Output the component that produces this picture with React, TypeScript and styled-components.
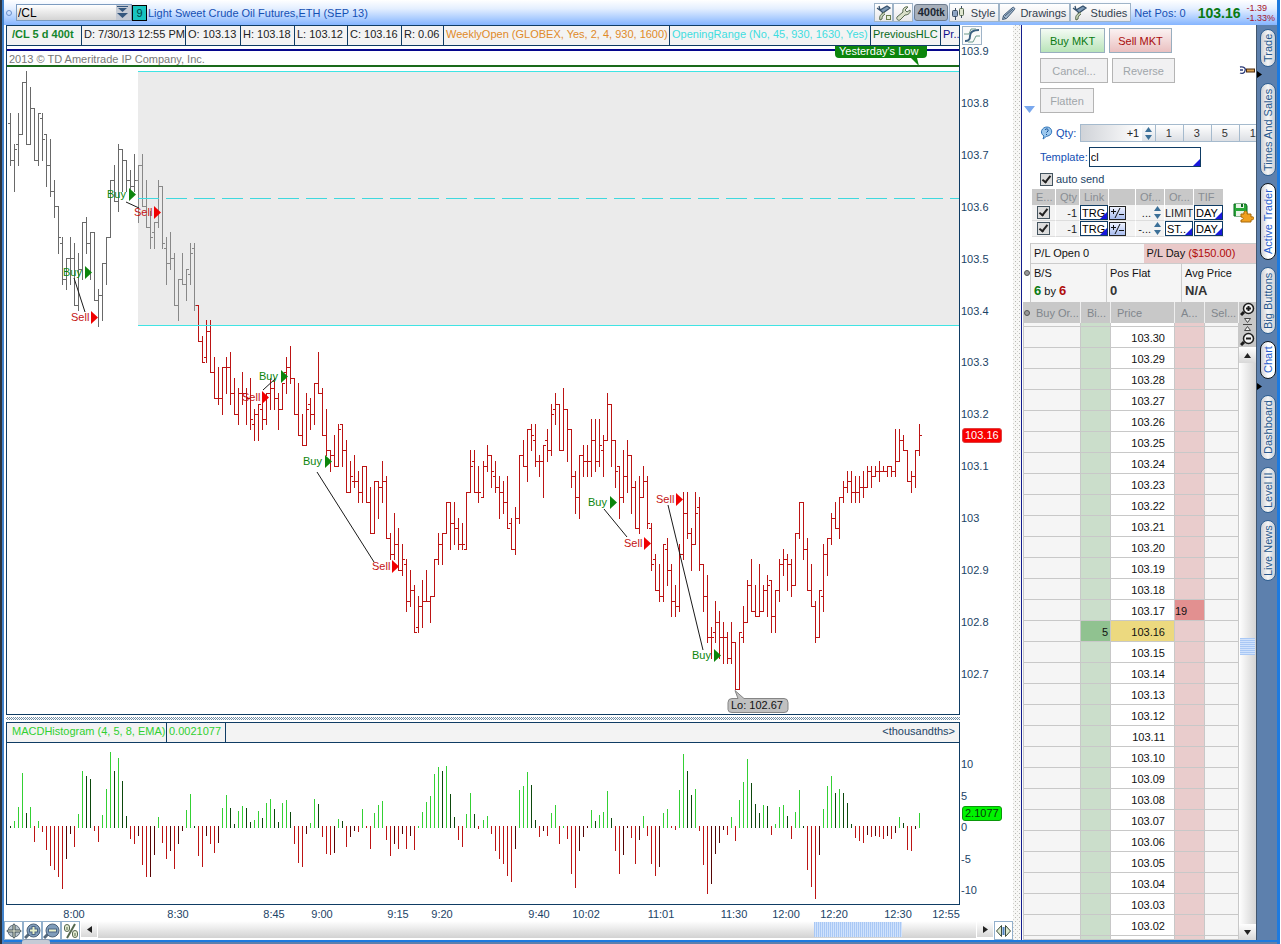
import React from "react";
import styled, { createGlobalStyle } from "styled-components";

const NAVY = "#0f3c64";
const INK = "#1b4366";
const BLUE = "#1450b4";
const GREEN = "#0c850c";
const RED = "#bc1414";

const GlobalStyle = createGlobalStyle`
  *, *::before, *::after { box-sizing: border-box; }
  body {
    margin: 0;
    background: #fff;
    font: 11px/14px "Liberation Sans", Arial, sans-serif;
    color: #111;
  }
  button, input, select { font: inherit; color: inherit; margin: 0; padding: 0; border-radius: 0; }
  button { cursor: pointer; white-space: nowrap; }
  svg { display: block; flex: none; }
`;

/* ---------- market data, in cents above 102.00: high low close [open] ---------- */

const BAR_SOURCE = `
178 168 169 176|172 163 171|178 168 174 172|184 174 184|186 172 172|183 172 179|179 169 169|178 168 178|178 169 173 177|174 164 168 174
173 162 163|165 158 160|160 151 154|154 145 146 153|150 144 150|154 145 150|153 141 141|151 140 148|157 146 157|158 151 153
155 146 155|155 142 142|144 137 143|149 138 149|154 145 154|165 154 165|168 161 161|172 159 171|171 163 169|169 163 165
167 163 164|170 163 165|168 157 168|170 160 160|165 156 156|159 152 154|157 152 157 155|165 156 164|164 152 153|154 145 149 152
155 148 150|151 141 141|146 138 146|151 145 145|148 142 148|153 145 151 147|153 140 141 152|141 134 134|135 130 130|138 130 136 131
138 128 128|131 123 123|129 122 123|129 120 129|131 124 129|132 122 124|127 120 120|125 118 124|128 122 124|125 118 123
127 117 119|121 115 120 118|122 115 122|124 117 119 121|124 118 124|127 121 125|127 121 123|124 117 121|126 121 126|131 124 129 128
133 126 127|127 120 120|126 116 116|120 114 114|124 114 121|123 117 120 122|126 118 126|132 124 124|125 116 116|121 112 113
113 109 112|116 110 110|118 110 117|118 110 113 118|115 105 105|111 105 108|112 106 107 107|109 103 105|110 103 110|110 103 103
106 97 97|107 97 107|107 100 106|111 103 107|108 96 96|97 92 93|101 92 95|98 90 90|95 89 92|92 82 84 91
90 83 86|87 78 78|85 78 83 79|88 79 84|90 84 84|85 80 85|92 85 92|97 91 95|97 91 97|103 97 103
103 94 99|103 95 98|100 94 95|99 94 95|105 94 105 94|113 105 110|113 105 105 111|110 103 105|111 104 110 104|114 109 112
112 106 109|111 105 106 108|108 100 105|107 101 103|108 98 98|100 94 94 99|102 93 100|112 99 112|115 110 110|117 107 117
118 113 116|118 110 111 115|112 108 111|114 104 114|117 111 113 115|122 112 120|124 118 122 121|122 113 113|125 113 121|121 111 117
117 106 108|109 101 104|112 100 112|114 108 111|114 108 111|119 108 115|119 109 111|119 110 114|116 108 115 113|124 115 122
122 110 115|115 106 109|110 100 104 110|113 103 108|115 105 112|112 101 106|107 98 98|108 97 104|110 104 107|108 98 99
99 90 91 98|93 86 86 92|91 84 85|95 84 95|96 87 90 94|91 81 84|87 81 83|95 82 93|105 92 101|105 96 97
98 90 95|105 95 101|104 90 91 102|91 82 85|89 76 77|79 73 77|84 76 80 78|82 73 77|80 72 77|78 72 73
80 72 76|76 67 67|78 67 78|83 76 80 77|88 80 87|92 82 82|87 81 81|91 81 82|87 82 86|89 81 87
88 78 81 88|86 78 86|92 84 91|94 89 92|93 86 91|92 85 87|97 87 97|103 96 103|103 92 94|96 86 86
91 83 83|84 76 77|86 77 86|95 82 93 85|96 89 96|101 95 100|103 98 98|104 96 104|107 103 106|109 105 107
109 103 105|108 103 105|108 103 106|109 104 106|110 106 109|110 106 108|110 108 109|111 107 109|110 109 109|110 108 110
110 108 109 110|117 108 111|117 111 115|116 113 113|113 107 107|109 105 108|113 106 113|118 112 116`;

interface Bar { high: number; low: number; open: number; close: number }

const BARS: Bar[] = (() => {
  let prev = 0;
  return BAR_SOURCE.trim().split(/[|\n]/).map((text) => {
    const [high, low, close, open = prev] = text.trim().split(" ").map(Number);
    prev = close;
    return { high, low, close, open };
  });
})();

const MACD = [
  1, 6, 20, 54, 14, 20, -15, 6, -5, -23, -39, -43, -50, -62, -32, -7, -20, 13, 56, 51, 48, -4, -15, 12, 38, 75, 56, 69, 46, 11,
  -12, -17, -9, -38, -50, -50, -28, 10, -16, -32, -24, -42, -17, -4, 17, 33, 1, -29, -40, -9, -17, -26, -16, 19, 32, 19, 3, 16, 21, 19, 5,
  7, 16, 9, 24, 28, 18, 5, 24, 27, 15, -17, -36, -40, -7, 4, 28, 23, -10, -27, -28, -26, 8, 6, -20, -10, -4, -5, 18, -1,
  -22, 14, 22, 26, -13, -29, -17, -22, -7, -22, -9, -23, 1, 15, 25, 31, 53, 60, 56, 61, 33, 10, -13, -20, 13, 34, 13, -2,
  7, 11, -7, -24, -32, -37, -49, -55, -22, 37, 41, 55, 42, 7, -10, -4, -9, 14, 22, -17, 1, -12, -47, -61, -24, -10, -1,
  17, 6, 12, 15, 36, 9, -24, -47, -28, -1, -11, -37, -13, 11, -9, -37, -49, -40, 14, 18, -1, -3, 37, 73, 56, 32, 38, -4,
  -38, -67, -57, -27, -16, -3, -8, 10, -14, 27, 45, 68, 44, 23, 14, 22, 21, -8, 3, 20, 22, 11, -12, 15, 37, 1, -43, -60, -72, -28,
  18, 41, 51, 34, 38, 34, 24, 3, -11, -14, -16, -8, -10, -9, -10, -12, -9, -12, -6, 10, 4, -23, -24, -2, 14,
];

const barX = (i: number) => 3 + 4 * i + (i > 117 ? 1 : 0);
const priceY = (p: number) => Math.round(4.6 + (190 - p) * 5.19);

const barPath = (from: number, to: number) =>
  BARS.slice(from, to)
    .map((b, k) => {
      const x = barX(from + k);
      const top = priceY(b.high);
      return `M${x} ${top}h1V${priceY(b.low) + 1}h-1zM${x - 2} ${priceY(b.open)}h2v1h-2zM${x + 1} ${priceY(b.close)}h2v1h-2z`;
    })
    .join("");

const SIGNALS: { side: "Buy" | "Sell"; x: number; y: number }[] = [
  { side: "Buy", x: 100, y: 148 }, { side: "Sell", x: 127, y: 166 },
  { side: "Buy", x: 56, y: 226 }, { side: "Sell", x: 64, y: 271 },
  { side: "Buy", x: 252, y: 330 }, { side: "Sell", x: 235, y: 351 },
  { side: "Buy", x: 296, y: 415 }, { side: "Sell", x: 365, y: 520 },
  { side: "Buy", x: 581, y: 456 }, { side: "Sell", x: 617, y: 497 },
  { side: "Sell", x: 649, y: 453 }, { side: "Buy", x: 685, y: 609 },
];
const TRADE_LINKS = "M119 156L132 162M67 232L78 266M256 344L268 333M310 426L367 516M597 463L620 491M661 459L696 604";

const TIMES: [string, number][] = [
  ["8:00", 67], ["8:30", 171], ["8:45", 267], ["9:00", 315], ["9:15", 391], ["9:20", 435], ["9:40", 532], ["10:02", 579],
  ["11:01", 654], ["11:30", 727], ["12:00", 779], ["12:20", 827], ["12:30", 891], ["12:55", 939],
];

/* ---------- frame ---------- */

const Desktop = styled.div`
  display: flex;
  min-height: 100vh;
  border-left: 2px solid #2c3540;
  border-right: 1px solid #fff;
`;
const Frame = styled.div`
  flex: 1;
  min-width: 0;
  display: flex;
  flex-direction: column;
  border-left: 2px solid #4283cc;
  border-right: 3px solid #1e7ade;
`;
const TitleBar = styled.header`
  height: 25px;
  display: flex;
  align-items: center;
  padding-right: 2px;
  background: linear-gradient(#fff, #e4efff 35%, #85b5ff);
  color: ${BLUE};
  white-space: nowrap;
`;
const Main = styled.main`
  flex: 1;
  display: flex;
`;
const Footer = styled.footer`
  height: 4px;
  border-top: 2px solid #1e7ade;
  background: #5d80ad;
  padding-left: 18px;
`;
const FooterTab = styled.div`
  position: relative;
  top: -3px;
  width: 28px;
  height: 5px;
  border-radius: 3px 3px 0 0;
  border-top: 1px solid #8a9ab0;
  background: #c6cbd6;
  svg { margin: 0 auto; }
`;

/* ---------- title bar ---------- */

const LinkDot = styled.span`
  width: 6px;
  height: 6px;
  margin: 0 4px 0 2px;
  border: 1px solid #6a90cc;
  border-radius: 3px;
`;
const SymbolBox = styled.div`
  display: flex;
  width: 116px;
  height: 17px;
  border: 1px solid #7d9cc0;
  background: linear-gradient(#fff, #d4d4d4);
  input { flex: 1; width: 50px; border: 0; background: none; padding-left: 1px; font-size: 12px; color: #000; outline: 0; }
  button { width: 15px; border: 0; background: #c4cad4; }
`;
const LinkColor = styled.button`
  width: 15px;
  height: 16px;
  margin-right: 1px;
  border: 1px solid #000;
  background: #18c4c0;
  color: #044;
  line-height: 14px;
`;
const Title = styled.h1`
  margin: 0;
  font: inherit;
  flex: 1;
`;
const ToolButton = styled.button<{ $w: number }>`
  display: flex;
  align-items: center;
  justify-content: space-between;
  width: ${(p) => p.$w}px;
  height: 19px;
  padding: 0 3px 0 1px;
  border: 1px solid #9fb4c8;
  background: linear-gradient(#fff, #e8e8ea);
  color: #33404e;
`;
const Ticks = styled.button`
  width: 34px;
  height: 17px;
  margin: 0 1px;
  border: 1px solid #6d7c8e;
  border-radius: 3px;
  background: #a6afbb;
  color: #1c2733;
  font-weight: bold;
  line-height: 14px;
  small { font-size: 10px; }
`;
const NetPos = styled.span`
  margin: 0 12px 0 3px;
`;
const LastPrice = styled.strong`
  color: #0a7a12;
  font-size: 14px;
`;
const Change = styled.span`
  margin-left: 6px;
  color: #a8142c;
  font-size: 9px;
  line-height: 10px;
`;

/* ---------- chart ---------- */

const ChartPane = styled.section`
  flex: 1;
  min-width: 0;
  display: flex;
  flex-direction: column;
  background: #fff;
`;
const ChartRow = styled.div<{ $grow?: boolean }>`
  display: flex;
  padding-left: 2px;
  flex: ${(p) => (p.$grow ? 1 : "none")};
`;
const PlotBox = styled.div`
  flex: 1;
  min-width: 0;
  overflow: hidden;
  border: 1px solid ${NAVY};
`;
const StatusRow = styled.div`
  display: flex;
  height: 20px;
  border-bottom: 1px solid ${NAVY};
  background: #f3f3f3;
  line-height: 17px;
  white-space: nowrap;
`;
const Status = styled.span<{ $w?: number; $color?: string; $bold?: boolean; $start?: boolean }>`
  flex: ${(p) => (p.$w ? `0 0 ${p.$w}px` : 1)};
  padding-left: ${(p) => (p.$start ? 5 : 2)}px;
  overflow: hidden;
  border-right: ${(p) => (p.$w ? 1 : 0)}px solid ${NAVY};
  color: ${(p) => p.$color || "#222"};
  font-weight: ${(p) => (p.$bold ? "bold" : "normal")};
`;
const Unit = styled.span`
  margin-left: auto;
  padding-right: 4px;
  color: ${INK};
`;
const Plot = styled.svg<{ $h: number }>`
  width: 100%;
  height: ${(p) => p.$h}px;
  overflow: hidden;
  font-size: 11px;
`;
const AxisColumn = styled.div`
  position: relative;
  width: 53px;
  flex: none;
  display: flex;
  flex-direction: column;
`;
const AxisTool = styled.button`
  width: 20px;
  height: 19px;
  margin: 1px 0 0 2px;
  border: 1px solid #9fb4c8;
  background: #fafafa;
`;
const AxisLabels = styled.div<{ $h: number; $top: number }>`
  height: ${(p) => p.$h}px;
  margin-top: ${(p) => p.$top}px;
  padding-left: 1px;
  display: flex;
  flex-direction: column;
  justify-content: space-between;
  color: ${INK};
  line-height: 13px;
`;
const AxisBadge = styled.span<{ $top: number; $bg: string; $fg: string; $line: string }>`
  position: absolute;
  left: 2px;
  top: ${(p) => p.$top}px;
  width: 40px;
  height: 15px;
  padding-left: 2px;
  border: 1px solid ${(p) => p.$line};
  border-radius: 3px;
  background: ${(p) => p.$bg};
  color: ${(p) => p.$fg};
  line-height: 13px;
`;
const Hatch = styled.div`
  height: 3px;
  margin: 2px 53px 2px 2px;
  background: repeating-conic-gradient(#6f8ba3 0 25%, #fff 0 50%) 0 0 / 2px 2px;
`;
const TimeAxis = styled.div`
  padding: 0 53px 0 3px;
`;
const ScrollRow = styled.div`
  display: flex;
  height: 19px;
`;
const ZoomButton = styled.button`
  display: flex;
  align-items: center;
  justify-content: center;
  width: 19px;
  height: 19px;
  border: 1px solid #93b0cc;
  background: #fff;
`;
const ArrowButton = styled.button`
  display: flex;
  align-items: center;
  justify-content: center;
  width: 16px;
  height: 16px;
  margin: 0 1px;
  border: 0;
  background: linear-gradient(#fff, #d8d8d8);
`;
const Track = styled.div`
  flex: 1;
  display: flex;
  height: 17px;
  padding: 1px 74px 1px 0;
  justify-content: flex-end;
  background: linear-gradient(#fff, #d2d2d2);
`;
const Thumb = styled.div`
  width: 88px;
  background: repeating-linear-gradient(90deg, #a9c8f5 0 1px, #d0e2fc 1px 2px);
`;
const Splitter = styled.div`
  width: 8px;
  background:
    conic-gradient(at 1px 1px, transparent 75%, #b8b8b4 0) 2px 0 / 4px 4px,
    conic-gradient(at 1px 1px, transparent 75%, #d0d0cc 0) 0 2px / 4px 4px,
    #f7f7f5;
`;

/* ---------- order panel ---------- */

const TradePanel = styled.aside`
  width: 235px;
  flex: none;
  overflow: hidden;
  border-left: 1px solid #141e8c;
  padding-left: 1px;
  background: #fff;
  white-space: nowrap;
`;
const OrderArea = styled.div`
  padding: 3px 0 6px;
`;
const OrderRow = styled.div<{ $gutter?: boolean; $h: number; $mb: number }>`
  display: flex;
  align-items: center;
  height: ${(p) => p.$h}px;
  margin-bottom: ${(p) => p.$mb}px;
  padding-left: ${(p) => (p.$gutter ? 0 : 17)}px;
  color: ${BLUE};
`;
const Collapse = styled.button`
  width: 17px;
  height: 24px;
  padding-left: 1px;
  border: 0;
  background: none;
  display: flex;
  align-items: flex-end;
`;
const OrderButton = styled.button<{ $w: number; $tone?: "buy" | "sell" }>`
  width: ${(p) => p.$w}px;
  height: 25px;
  margin-right: 4px;
  border: 1px solid ${(p) => (p.$tone ? "#98aebf" : "#b4b4b4")};
  background: ${(p) =>
    p.$tone === "buy" ? "linear-gradient(#f4fbf4, #b9e4b9)" : p.$tone === "sell" ? "linear-gradient(#fbf2f2, #eac0c0)" : "#f1f1f2"};
  color: ${(p) => (p.$tone === "buy" ? "#0a7a12" : p.$tone === "sell" ? "#a80c0c" : "#a0a6aa")};
`;
const Wrench = styled.button`
  margin-left: auto;
  border: 0;
  background: none;
`;
const QtyInput = styled.input`
  width: 62px;
  height: 18px;
  flex: none;
  margin-left: 4px;
  padding-right: 3px;
  border: 1px solid #a5bacd;
  border-right: 0;
  background: linear-gradient(90deg, #d0d3d8, #fff);
  color: #222;
  text-align: right;
`;
const SpinBox = styled.button<{ $boxed?: boolean }>`
  display: flex;
  flex: none;
  flex-direction: column;
  align-items: center;
  justify-content: center;
  gap: 3px;
  width: 13px;
  height: ${(p) => (p.$boxed ? 18 : 14)}px;
  border: ${(p) => (p.$boxed ? "1px solid #a5bacd" : 0)};
  border-width: ${(p) => (p.$boxed ? "1px 0" : 0)};
  background: ${(p) => (p.$boxed ? "linear-gradient(#fff, #dde2e8)" : "none")};
`;
const QtyButton = styled.button`
  flex: 0 0 28px;
  height: 18px;
  padding-right: 2px;
  border: 1px solid #a5bacd;
  border-right-width: 0;
  background: linear-gradient(#fff, #dcdfe4);
  color: #333;
`;
const TemplateLabel = styled.label`
  margin-right: 1px;
`;
const Pick = styled.span<{ $w: number; $h: number }>`
  position: relative;
  display: inline-block;
  vertical-align: top;
  width: ${(p) => p.$w}px;
  height: ${(p) => p.$h}px;
  border: 1px solid ${NAVY};
  background: #fff;
  color: #000;
  select { appearance: none; display: block; width: 100%; height: 100%; padding-left: 1px; border: 0; background: none; outline: 0; }
  &::after {
    content: "";
    position: absolute;
    right: 0;
    bottom: 0;
    border-left: 7px solid transparent;
    border-bottom: 7px solid #1818dc;
    pointer-events: none;
  }
`;
const Check = styled.input`
  appearance: none;
  display: flex;
  justify-content: center;
  flex: none;
  width: 13px;
  height: 13px;
  border: 1px solid #44545f;
  background: #dcdcdc;
  &:checked::after {
    content: "";
    width: 5px;
    height: 9px;
    border: solid #222;
    border-width: 0 2px 2px 0;
    transform: rotate(38deg);
  }
`;
const AutoSend = styled.label`
  margin-left: 3px;
  color: ${INK};
`;
const LegArea = styled.div`
  display: flex;
  align-items: center;
  gap: 9px;
  padding-left: 9px;
`;
const LegTable = styled.table`
  border-spacing: 0;
  table-layout: fixed;
  width: 192px;
  th, td { height: 16px; padding: 0; line-height: 14px; overflow: hidden; border-right: 1px solid #fff; font-weight: normal; }
  th { background: #c8c8c8; color: #888e94; padding-left: 4px; text-align: left; }
  td { background: #f3f3f3; color: #222; text-align: right; padding-right: 2px; border-bottom: 1px solid #ddd; }
  td:nth-child(n + 3) { padding: 0; text-align: left; }
  td:first-child { padding-left: 5px; }
`;
const PlusMinus = styled.button`
  display: block;
  width: 17px;
  height: 14px;
  border: 1px solid #222;
  background: linear-gradient(#eef2ff, #a9bdf0);
`;
const OffsetCell = styled.div`
  display: flex;
  align-items: center;
  justify-content: flex-end;
`;

/* ---------- position summary ---------- */

const Summary = styled.div`
  display: flex;
  padding-left: 1px;
`;
const Bullet = styled.span`
  width: 6px;
  height: 6px;
  flex: none;
  border-radius: 3px;
  border: 1px solid #555;
  background: #999;
`;
const SummaryGrid = styled.div`
  flex: 1;
  border-left: 1px solid #c8c8c8;
  color: #111;
`;
const ProfitRow = styled.div`
  display: grid;
  grid-template-columns: 1fr 1fr;
  border-top: 1px solid #ccc;
  line-height: 19px;
`;
const Profit = styled.span<{ $loss?: boolean }>`
  padding-left: 3px;
  background: ${(p) => (p.$loss ? "#e9c9c9" : "#f5f5f5")};
`;
const LossText = styled.span`
  color: #b00c0c;
`;
const PositionRow = styled.dl`
  display: grid;
  grid-template-columns: 1fr 1fr 1fr;
  margin: 0;
  height: 39px;
  border-top: 1px solid #ccc;
  background: #f5f5f5;
  div { padding: 2px 0 0 3px; }
  div + div { border-left: 1px solid #ccc; }
  dt { line-height: 15px; }
  dd { margin: 0; line-height: 20px; }
`;
const Figure = styled.b<{ $color?: string }>`
  font-size: 13px;
  color: ${(p) => p.$color || "#333"};
`;

/* ---------- price ladder ---------- */

const LadderArea = styled.div`
  display: flex;
`;
const Ladder = styled.table`
  border-spacing: 0;
  table-layout: fixed;
  width: 216px;
  border-left: 1px solid #c8c8c8;
  th, td { padding: 0; overflow: hidden; line-height: 20px; }
  th {
    height: 21px;
    padding-left: 6px;
    background: #c8c8c8;
    border-right: 1px solid #eee;
    color: #80868c;
    font-weight: normal;
    text-align: left;
  }
  th:first-child { padding-left: 0; }
`;
const LadderCell = styled.td<{ $bg: string; $align?: string; $h: number }>`
  height: ${(p) => p.$h}px;
  border-right: 1px solid #c8c8c8;
  border-bottom: 1px solid #c8c8c8;
  background: ${(p) => p.$bg};
  color: #111;
  text-align: ${(p) => p.$align || "left"};
`;
const CellText = styled.span<{ $right?: number }>`
  display: block;
  height: 20px;
  padding-right: ${(p) => p.$right || 0}px;
  line-height: 22px;
`;
const HeadDot = styled.span`
  display: flex;
  align-items: center;
  gap: 6px;
`;
const VScroll = styled.div`
  width: 17px;
  flex: none;
  display: flex;
  flex-direction: column;
  background: linear-gradient(90deg, #fff, #d4d4d4);
`;
const VButton = styled.button<{ $dark?: boolean }>`
  display: flex;
  align-items: center;
  justify-content: center;
  flex: 0 0 ${(p) => (p.$dark ? 15 : 16)}px;
  border: 0;
  background: ${(p) => (p.$dark ? "#c8c8c8" : "linear-gradient(#fff, #d8d8d8)")};
`;
const VTrack = styled.div`
  flex: 1;
  display: grid;
  grid-template-rows: 275fr 17px 269fr;
`;
const VThumb = styled.div`
  grid-row: 2;
  margin: 0 1px;
  background: repeating-linear-gradient(#a9c8f5 0 1px, #d0e2fc 1px 2px);
`;

/* ---------- right-hand tab rail ---------- */

const Rail = styled.nav`
  width: 21px;
  flex: none;
  display: flex;
  flex-direction: column;
  gap: 7px;
  padding: 4px 0 0 3px;
  border-left: 1px solid #42566e;
  background: #5d80ad;
`;
const RailTab = styled.button<{ $h: number; $active?: boolean }>`
  width: 16px;
  height: ${(p) => p.$h}px;
  border: 1px solid ${(p) => (p.$active ? "#101820" : "#2f5f92")};
  border-radius: 8px;
  background: linear-gradient(90deg, ${(p) => (p.$active ? "#fff, #fff" : "#c9ced6, #f6f6f6")}, #ccd0d6);
  color: ${(p) => (p.$active ? "#2860cc" : "#27598e")};
  writing-mode: vertical-rl;
  transform: rotate(180deg);
  line-height: 14px;
  text-align: center;
`;
const RailMark = styled.span`
  height: 2px;
  svg { margin: -3px 0 0 -3px; }
`;

/* ---------- icons ---------- */

const Flask = ({ extra }: { extra?: boolean }) => (
  <svg width="16" height="16" viewBox="0 0 16 16" fill="none">
    <path d="M1 3l4 3M3 1l1 4M4 5l7-4 3 2-7 5z" stroke="#35506c" fill="#7d99b5" strokeWidth="1.300" />
    <path d="M9 7c-5 2-6 5-5 8l2-1c0-2 1-4 3-5" stroke="#54664e" fill="#c8d4b8" />
    {extra && <rect x="10.500" y="10.500" width="4" height="4" stroke="#6d8050" fill="#e6eed8" />}
  </svg>
);
const WrenchTool = () => (
  <svg width="16" height="16" viewBox="0 0 16 16">
    <path d="M2 12l6-5c-1-3 2-6 5-5l-3 3 2 2 3-2c1 3-2 5-5 5l-5 5c-2 1-4-1-3-3z" fill="#d9dfc8" stroke="#55684f" />
  </svg>
);
const Candles = () => (
  <svg width="15" height="16" viewBox="0 0 15 16">
    <path d="M4.500 3v12M10.500 1v12" stroke="#3d4f66" />
    <rect x="1.500" y="5.500" width="5" height="6" rx="1" fill="#8fa5c4" stroke="#3d4f66" />
    <rect x="8.500" y="3.500" width="4" height="7" rx="1" fill="#dfe6d0" stroke="#54664e" />
  </svg>
);
const Pencil = () => (
  <svg width="15" height="16" viewBox="0 0 15 16">
    <path d="M1.500 14.500l1-4 9-8c1-1 3 1 2 2l-8 9z" fill="#9db3c9" stroke="#445c78" />
    <path d="M2 11l3 3M4 11l8-7" stroke="#445c78" />
  </svg>
);
const DoubleDown = () => (
  <svg width="13" height="15" viewBox="0 0 13 15" fill="#34577e">
    <path d="M1 1h11v1H1zM2 3h9L6.500 7zM1 8h11L6.500 13z" />
  </svg>
);
const Triangle = ({ dir, w = 5, color = "#222" }: { dir: "up" | "down" | "left" | "right"; w?: number; color?: string }) => {
  const h = Math.ceil(w / 2) + 1;
  const flat = dir === "up" || dir === "down";
  const d = { up: `M0 ${h}h${w}L${w / 2} 0z`, down: `M0 0h${w}L${w / 2} ${h}z`, left: `M${h} 0v${w}L0 ${w / 2}z`, right: `M0 0v${w}L${h} ${w / 2}z` }[dir];
  return (
    <svg width={flat ? w : h} height={flat ? h : w} fill={color}>
      <path d={d} />
    </svg>
  );
};
const Crosshair = () => (
  <svg width="16" height="16" viewBox="0 0 16 16">
    <circle cx="8" cy="8" r="6" fill="#b8c4cc" stroke="#5a6a78" />
    <path d="M8 0l1.500 3v3.500H13L16 8l-3 1.500H9.500V13L8 16l-1.500-3V9.500H3L0 8l3-1.500h3.500V3z" fill="#3c4c54" />
    <path d="M8 2v12M2 8h12" stroke="#eef0d8" />
  </svg>
);
const Lens = ({ plus }: { plus?: boolean }) => (
  <svg width="17" height="16" viewBox="0 0 17 16">
    <path d="M5 11l-4 4" stroke="#54687c" strokeWidth="3" />
    <circle cx="9.500" cy="7.500" r="6.500" fill="#7f9cba" stroke="#4a6078" />
    <path d={plus ? "M5 7.500h9M9.500 3v9" : "M5 7.500h9"} stroke="#4c6484" strokeWidth="4" />
    <path d={plus ? "M6 7.500h7M9.500 4v7" : "M6 7.500h7"} stroke="#e8f0c8" strokeWidth="2" />
  </svg>
);
const Percent = () => (
  <svg width="16" height="16" viewBox="0 0 16 16" fill="#e2ead0" stroke="#55684f">
    <path d="M12 1L4 15" strokeWidth="2" />
    <rect x="1.500" y="1.500" width="5" height="7" rx="2.500" />
    <rect x="9.500" y="7.500" width="5" height="7" rx="2.500" />
    <path d="M4 4v3M12 10v3" />
  </svg>
);
const FitArrows = () => (
  <svg width="15" height="14" viewBox="0 0 15 14" fill="#dde8cc" stroke="#3a4a3a">
    <path d="M5.500 1.500v11l-5-5.500zM9.500 1.500v11l5-5.500z" />
    <path d="M7.500 3v8" stroke="#4a80c0" strokeWidth="2" />
  </svg>
);
const AutoScale = () => (
  <svg width="18" height="17" viewBox="0 0 18 17" fill="none">
    <path d="M2 14c5 0 5-3 5-5 0-4 3-6 9-6" stroke="#3a5f80" strokeWidth="2" />
    <path d="M1 7h5l2-5h5M5 15h5l3-6h4" stroke="#6d9a8c" />
  </svg>
);
const Help = () => (
  <svg width="13" height="14" viewBox="0 0 13 14">
    <path d="M3 13l1-3C-1 7 2 1 7 1s7 7 1 9c-2 0-3 2-5 3z" fill="#9cc8ee" stroke="#2f74b8" />
    <path d="M5 4c1-2 4-1 3 1L6.500 6.500M6.500 8v1" stroke="#114c90" fill="none" />
  </svg>
);
const Spanner = () => (
  <svg width="17" height="9" viewBox="0 0 17 9" fill="none">
    <path d="M1 1c4-1 6 2 5 3.500C6 7 3 8 1 7M1 4h3" stroke="#2d3b78" strokeWidth="1.300" />
    <path d="M7 4.500h9" stroke="#4a2a10" strokeWidth="4" />
    <path d="M8 4.500h7" stroke="#d8a050" strokeWidth="2" />
  </svg>
);
const SaveTemplate = () => (
  <svg width="21" height="20" viewBox="0 0 21 20">
    <path d="M1 1h12l1 2v10H1z" fill="#28a838" stroke="#0f6820" />
    <path d="M3 1h8v4H3zM3 8h8v5H3z" fill="#e8f4e8" />
    <path d="M8 1h2v3H8z" fill="#0f6820" />
    <path d="M8 11h3c-1-4 4-4 3 0h4v3c4-1 4 3 0 3v2H8v-2c3 0 3-3 0-3z" fill="#f0a020" stroke="#a86808" />
  </svg>
);
const PlusMinusIcon = () => (
  <svg width="15" height="12" viewBox="0 0 15 12" fill="none" stroke="#111">
    <path d="M1 4.500h5M3.500 2v5M9 7.500h5" />
    <path d="M5 11L10 1" />
  </svg>
);
const LadderLens = ({ plus }: { plus?: boolean }) => (
  <svg width="15" height="15" viewBox="0 0 15 15" fill="none" stroke="#1c1c1c">
    <path d="M4 10l-3 3" strokeWidth="3" />
    <circle cx="8.500" cy="6.500" r="5" strokeWidth="1.500" fill="#f2f2f2" />
    <path d={plus ? "M6 6.500h5M8.500 4v5" : "M6 6.500h5"} strokeWidth="2" />
  </svg>
);
const Recenter = () => (
  <svg width="9" height="13" viewBox="0 0 9 13" fill="#eee" stroke="#444">
    <path d="M1.500.5h6l-3 4zM1.500 12.500h6l-3-4zM0 6.500h9" />
  </svg>
);

/* ---------- pieces ---------- */

const PriceChart = () => (
  <Plot $h={668} role="img" aria-label="Price bars">
    <rect x="131" y="25" width="100%" height="254" fill="#ebebeb" />
    <g shapeRendering="crispEdges">
      <rect y="3" width="100%" height="2" fill="#06068c" />
      <rect y="19" width="100%" height="2" fill="#1a6a1a" />
      <path d={barPath(0, 32)} fill="#696969" />
      <path d={barPath(32, 47)} fill="#888" />
      <path d={barPath(47, BARS.length)} fill={RED} />
      <rect x="131" y="25" width="100%" height="1" fill="#3fe4e4" />
      <rect x="131" y="279" width="100%" height="1" fill="#3fe4e4" />
      <line x1="131" x2="100%" y1="152.500" y2="152.500" stroke="#3fd8de" strokeDasharray="21 7" />
    </g>
    <text x="2" y="17" fill="#777">2013 © TD Ameritrade IP Company, Inc.</text>
    <path d={TRADE_LINKS} stroke="#1a1a1a" fill="none" />
    {SIGNALS.map(({ side, x, y }) => (
      <g key={`${x}-${y}`} fill={side === "Buy" ? GREEN : "#c41414"}>
        <text x={x} y={y + 4}>{side}</text>
        <path d={`M${x + (side === "Buy" ? 22 : 20)} ${y - 6}v13l7-6.500z`} fill={side === "Buy" ? GREEN : "#f00000"} />
      </g>
    ))}
    <path d="M828-2h92v10q0 4-4 4h-6l2 8-8-8h-72q-4 0-4-4z" fill={GREEN} />
    <text x="832" y="9" fill="#fff">Yesterday's Low</text>
    <path d="M725 652.500h6l-3-8 9 8h40q4 0 4 4v7q0 3-4 3h-52q-4 0-4-3v-7q0-4 4-4z" fill="#c0c0c0" stroke="#858585" />
    <text x="724" y="663" fill="#111">Lo: 102.67</text>
  </Plot>
);

const MacdChart = () => (
  <Plot $h={161} role="img" aria-label="MACD histogram" shapeRendering="crispEdges">
    {MACD.map((v, i) => {
      const prev = i ? MACD[i - 1] : v;
      const fill = v > 0 ? (v > prev ? "#34d034" : "#0c480c") : v < prev ? RED : "#560606";
      return <rect key={i} x={barX(i)} y={v > 0 ? 84 - v : 83} width="1" height={Math.abs(v) + 1} fill={fill} />;
    })}
  </Plot>
);

const PRICE_LABELS = ["103.9", "103.8", "103.7", "103.6", "103.5", "103.4", "103.3", "103.2", "103.1", "103", "102.9", "102.8", "102.7"];

const QTY_PRESETS = ["1", "3", "5", "1"];

const LEGS = [
  { offset: "...", order: "LIMIT", fixed: true },
  { offset: "-...", order: "ST..", fixed: false },
];

const LADDER_PRICES = Array.from({ length: 29 }, (_, i) => ((10330 - i) / 100).toFixed(2));

const LadderRow = ({ price, h = 21 }: { price?: string; h?: number }) => {
  const bid = price === "103.16";
  const ask = price === "103.17";
  return (
    <tr>
      <LadderCell $h={h} $bg="#f5f5f5" />
      <LadderCell $h={h} $bg={bid ? "#90c290" : "#cbdecb"} $align="right">{bid && <CellText $right={2}>5</CellText>}</LadderCell>
      <LadderCell $h={h} $bg={bid ? "#ecd97f" : "#fff"} $align="right">{price && <CellText $right={9}>{price}</CellText>}</LadderCell>
      <LadderCell $h={h} $bg={ask ? "#e29090" : "#e9cccc"}>{ask && <CellText>19</CellText>}</LadderCell>
      <LadderCell $h={h} $bg="#f5f5f5" />
    </tr>
  );
};

const Spinner = ({ boxed, label }: { boxed?: boolean; label: string }) => (
  <SpinBox $boxed={boxed} aria-label={label}>
    <Triangle dir="up" w={7} color="#3c7098" />
    <Triangle dir="down" w={7} color="#3c7098" />
  </SpinBox>
);

export default function App() {
  return (
    <Desktop>
      <GlobalStyle />
      <Frame>
        <TitleBar>
          <LinkDot />
          <SymbolBox>
            <input aria-label="Symbol" defaultValue="/CL" />
            <button aria-label="Symbol list"><DoubleDown /></button>
          </SymbolBox>
          <LinkColor>9</LinkColor>
          <Title>Light Sweet Crude Oil Futures,ETH (SEP 13)</Title>
          <ToolButton $w={19} aria-label="Edit studies"><Flask extra /></ToolButton>
          <ToolButton $w={20} aria-label="Settings"><WrenchTool /></ToolButton>
          <Ticks>400<small>tk</small></Ticks>
          <ToolButton $w={50}><Candles />Style</ToolButton>
          <ToolButton $w={71}><Pencil />Drawings</ToolButton>
          <ToolButton $w={61}><Flask />Studies</ToolButton>
          <NetPos>Net Pos: 0</NetPos>
          <LastPrice>103.16</LastPrice>
          <Change>-1.39<br />-1.33%</Change>
        </TitleBar>

        <Main>
          <ChartPane>
            <ChartRow $grow>
              <PlotBox>
                <StatusRow>
                  <Status $w={75} $color="#14862c" $bold $start>/CL 5 d 400t</Status>
                  <Status $w={104}>D: 7/30/13 12:55 PM</Status>
                  <Status $w={55}>O: 103.13</Status>
                  <Status $w={54}>H: 103.18</Status>
                  <Status $w={53}>L: 103.12</Status>
                  <Status $w={54}>C: 103.16</Status>
                  <Status $w={42}>R: 0.06</Status>
                  <Status $w={226} $color="#e08a28">WeeklyOpen (GLOBEX, Yes, 2, 4, 930, 1600)</Status>
                  <Status $w={201} $color="#3fdde0">OpeningRange (No, 45, 930, 1630, Yes)</Status>
                  <Status $w={70} $color="#0a6a1a">PreviousHLC</Status>
                  <Status $color="#10108c">Pr..</Status>
                </StatusRow>
                <PriceChart />
              </PlotBox>
              <AxisColumn>
                <AxisTool aria-label="Auto scale"><AutoScale /></AxisTool>
                <AxisLabels $h={636} $top={0}>
                  {PRICE_LABELS.map((p) => <span key={p}>{p}</span>)}
                </AxisLabels>
                <AxisBadge $top={403} $bg="#f80000" $fg="#fff" $line="#e04040">103.16</AxisBadge>
              </AxisColumn>
            </ChartRow>
            <Hatch />
            <ChartRow>
              <PlotBox>
                <StatusRow>
                  <Status $w={160} $color="#30d030" $start>MACDHistogram (4, 5, 8, EMA)</Status>
                  <Status $w={59} $color="#30d030">0.0021077</Status>
                  <Unit>&lt;thousandths&gt;</Unit>
                </StatusRow>
                <MacdChart />
              </PlotBox>
              <AxisColumn>
                <AxisLabels $h={139} $top={36}>
                  {["10", "5", "0", "-5", "-10"].map((v) => <span key={v}>{v}</span>)}
                </AxisLabels>
                <AxisBadge $top={84} $bg="#00f400" $fg="#0a3a0a" $line="#0a980a">2.1077</AxisBadge>
              </AxisColumn>
            </ChartRow>
            <TimeAxis>
              <Plot $h={16}>
                {TIMES.map(([t, x]) => <text key={t} x={x} y="13" textAnchor="middle" fill={INK}>{t}</text>)}
              </Plot>
            </TimeAxis>
            <ScrollRow>
              <ZoomButton aria-label="Crosshair"><Crosshair /></ZoomButton>
              <ZoomButton aria-label="Zoom in"><Lens plus /></ZoomButton>
              <ZoomButton aria-label="Zoom out"><Lens /></ZoomButton>
              <ZoomButton aria-label="Percent"><Percent /></ZoomButton>
              <ArrowButton aria-label="Scroll left"><Triangle dir="left" w={7} /></ArrowButton>
              <Track><Thumb /></Track>
              <ArrowButton aria-label="Scroll right"><Triangle dir="right" w={7} /></ArrowButton>
              <ZoomButton aria-label="Fit"><FitArrows /></ZoomButton>
            </ScrollRow>
          </ChartPane>

          <Splitter />

          <TradePanel>
            <OrderArea>
              <OrderRow $h={25} $mb={5}>
                <OrderButton $w={65} $tone="buy">Buy MKT</OrderButton>
                <OrderButton $w={63} $tone="sell">Sell MKT</OrderButton>
              </OrderRow>
              <OrderRow $h={25} $mb={5}>
                <OrderButton $w={68}>Cancel...</OrderButton>
                <OrderButton $w={63}>Reverse</OrderButton>
                <Wrench aria-label="Customize"><Spanner /></Wrench>
              </OrderRow>
              <OrderRow $h={25} $mb={11} $gutter>
                <Collapse aria-label="Collapse"><Triangle dir="down" w={11} color="#7aa8ee" /></Collapse>
                <OrderButton $w={54}>Flatten</OrderButton>
              </OrderRow>
              <OrderRow $h={18} $mb={5}>
                <Help />
                <label htmlFor="qty">&nbsp;Qty:</label>
                <QtyInput id="qty" defaultValue="+1" />
                <Spinner boxed label="Change quantity" />
                {QTY_PRESETS.map((n, i) => <QtyButton key={i}>{n}</QtyButton>)}
              </OrderRow>
              <OrderRow $h={20} $mb={5}>
                <TemplateLabel htmlFor="template">Template:</TemplateLabel>
                <Pick $w={112} $h={20}>
                  <select id="template"><option>cl</option></select>
                </Pick>
              </OrderRow>
              <OrderRow $h={14} $mb={3}>
                <Check type="checkbox" id="auto" defaultChecked />
                <AutoSend htmlFor="auto">auto send</AutoSend>
              </OrderRow>
              <LegArea>
                <LegTable>
                  <colgroup>
                    <col width="24" /><col width="24" /><col width="29" /><col width="27" /><col width="29" /><col width="29" /><col width="30" />
                  </colgroup>
                  <thead>
                    <tr><th>E...</th><th>Qty</th><th>Link</th><th></th><th>Of...</th><th>Or...</th><th>TIF</th></tr>
                  </thead>
                  <tbody>
                    {LEGS.map((leg) => (
                      <tr key={leg.order}>
                        <td><Check type="checkbox" aria-label={`Enable ${leg.order}`} defaultChecked /></td>
                        <td>-1</td>
                        <td><Pick $w={28} $h={15}><select aria-label="Link"><option>TRG</option></select></Pick></td>
                        <td><PlusMinus aria-label="Toggle sign"><PlusMinusIcon /></PlusMinus></td>
                        <td><OffsetCell>{leg.offset}<Spinner label="Change offset" /></OffsetCell></td>
                        <td>{leg.fixed ? leg.order : <Pick $w={28} $h={15}><select aria-label="Order"><option>{leg.order}</option></select></Pick>}</td>
                        <td><Pick $w={29} $h={15}><select aria-label="Time in force"><option>DAY</option></select></Pick></td>
                      </tr>
                    ))}
                  </tbody>
                </LegTable>
                <SaveTemplate />
              </LegArea>
            </OrderArea>

            <Summary>
              <HeadDot><Bullet /></HeadDot>
              <SummaryGrid>
                <ProfitRow>
                  <Profit>P/L Open 0</Profit>
                  <Profit $loss>P/L Day <LossText>($150.00)</LossText></Profit>
                </ProfitRow>
                <PositionRow>
                  <div><dt>B/S</dt><dd><Figure $color="#0a7a12">6</Figure> by <Figure $color="#b00c0c">6</Figure></dd></div>
                  <div><dt>Pos Flat</dt><dd><Figure>0</Figure></dd></div>
                  <div><dt>Avg Price</dt><dd><Figure>N/A</Figure></dd></div>
                </PositionRow>
              </SummaryGrid>
            </Summary>

            <LadderArea>
              <Ladder>
                <colgroup>
                  <col width="57" /><col width="30" /><col width="64" /><col width="30" /><col width="34" />
                </colgroup>
                <thead>
                  <tr><th><HeadDot><Bullet />Buy Or...</HeadDot></th><th>Bi...</th><th>Price</th><th>A...</th><th>Sel...</th></tr>
                </thead>
                <tbody>
                  <LadderRow h={4} />
                  {LADDER_PRICES.map((p) => <LadderRow key={p} price={p} />)}
                  <LadderRow h={4} />
                </tbody>
              </Ladder>
              <VScroll>
                <VButton $dark aria-label="Ladder zoom in"><LadderLens plus /></VButton>
                <VButton $dark aria-label="Recenter"><Recenter /></VButton>
                <VButton $dark aria-label="Ladder zoom out"><LadderLens /></VButton>
                <VButton aria-label="Scroll up"><Triangle dir="up" w={7} /></VButton>
                <VTrack><VThumb /></VTrack>
                <VButton aria-label="Scroll down"><Triangle dir="down" w={7} /></VButton>
              </VScroll>
            </LadderArea>
          </TradePanel>

          <Rail>
            <RailTab $h={38}>Trade</RailTab>
            <RailMark><Triangle dir="right" w={7} color="#000" /></RailMark>
            <RailTab $h={93}>Times And Sales</RailTab>
            <RailTab $h={77} $active>Active Trader</RailTab>
            <RailTab $h={67}>Big Buttons</RailTab>
            <RailTab $h={38} $active>Chart</RailTab>
            <RailMark><Triangle dir="right" w={7} color="#000" /></RailMark>
            <RailTab $h={65}>Dashboard</RailTab>
            <RailTab $h={46}>Level II</RailTab>
            <RailTab $h={61}>Live News</RailTab>
          </Rail>
        </Main>
        <Footer><FooterTab /></Footer>
      </Frame>
    </Desktop>
  );
}
